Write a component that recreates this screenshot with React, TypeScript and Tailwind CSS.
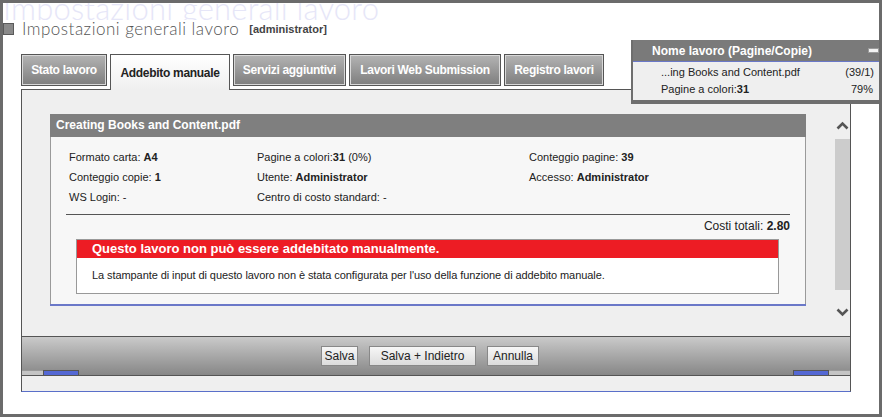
import React from 'react';

const tabs = [
  { label: 'Stato lavoro', w: 'w-[86px]' },
  { label: 'Addebito manuale', w: 'w-[120px]', active: true },
  { label: 'Servizi aggiuntivi', w: 'w-[113px]' },
  { label: 'Lavori Web Submission', w: 'w-[152px]' },
  { label: 'Registro lavori', w: 'w-[100px]' },
];

function Chevron({ up }: { up?: boolean }) {
  return (
    <svg width="13" height="9" viewBox="0 0 13 9" className="block">
      <path
        d={up ? 'M1.5 7.5 L6.5 2.5 L11.5 7.5' : 'M1.5 1.5 L6.5 6.5 L11.5 1.5'}
        fill="none"
        stroke="#555"
        strokeWidth="2.6"
      />
    </svg>
  );
}

function Field({ label, value }: { label: string; value?: string }) {
  return (
    <div className="h-[20px] leading-[20px] whitespace-nowrap">
      {label}
      {value && <span className="font-bold">{value}</span>}
    </div>
  );
}

export default function App() {
  return (
    <div className="relative w-[882px] h-[417px] bg-white border-[3px] border-[#6b6b6b] font-['Liberation_Sans',Arial,sans-serif] text-[#222] overflow-hidden">
      {/* Watermark title */}
      <div className="h-[17px] overflow-hidden">
        <div className="mt-[-3px] h-[17px] text-[31px] leading-[17px] text-[#e6e6f8] font-['Lato',sans-serif] font-light whitespace-nowrap tracking-[0.2px]">
          Impostazioni generali lavoro
        </div>
      </div>

      {/* Heading */}
      <div className="h-[17px] flex items-center">
        <div className="w-[11px] h-[12px] bg-[#8a8a8a] border border-[#5a5a5a]" />
        <span className="ml-[8px] text-[17px] leading-[17px] text-[#555] font-['Lato',sans-serif] font-light tracking-[0.5px]">
          Impostazioni generali lavoro
        </span>
        <span className="ml-[10px] mt-[2px] text-[11px] font-bold text-[#444]">[administrator]</span>
      </div>

      <div className="ml-[18px] w-[830px] mt-[17px]">
        {/* Tabs */}
        <div className="h-[35px] flex items-end gap-[3px] relative z-10">
          {tabs.map((t) =>
            t.active ? (
              <div
                key={t.label}
                className={`${t.w} h-[36px] -mb-px border border-b-0 border-[#555] bg-gradient-to-b from-white to-[#efefef] flex justify-center pt-[9px] text-[12px] font-bold text-[#222] tracking-[-0.3px]`}
              >
                {t.label}
              </div>
            ) : (
              <div
                key={t.label}
                className={`${t.w} h-[32px] mb-[3px] border border-[#555] shadow-[inset_0_0_0_1px_#d8d8d8] bg-gradient-to-b from-[#b4b4b4] to-[#7e7e7e] flex items-center justify-center text-[12px] font-bold text-white tracking-[-0.3px]`}
              >
                {t.label}
              </div>
            )
          )}
        </div>

        {/* Panel */}
        <div className="border-x border-t border-[#555] border-b border-b-[#5a6fc9]">
          {/* Scroll area */}
          <div className="h-[246px] bg-[#efefef] flex">
            <div className="flex-1 pl-[28px] pt-[24px]">
              <div className="w-[756px] border-b-2 border-[#6a78c8]">
                <div className="h-[23px] bg-[#7f7f7f] text-white font-bold text-[12px] leading-[23px] pl-[6px]">
                  Creating Books and Content.pdf
                </div>
                <div className="bg-[#f7f7f7] border-x border-[#9a9a9a] pt-[10px] pb-[10px] text-[11px]">
                  <div className="grid grid-cols-[188px_272px_1fr] pl-[18px]">
                    <div>
                      <Field label="Formato carta: " value="A4" />
                      <Field label="Conteggio copie: " value="1" />
                      <Field label="WS Login:  -" />
                    </div>
                    <div>
                      <div className="h-[20px] leading-[20px] whitespace-nowrap">
                        Pagine a colori:<span className="font-bold">31</span> (0%)
                      </div>
                      <Field label="Utente: " value="Administrator" />
                      <Field label="Centro di costo standard:  -" />
                    </div>
                    <div>
                      <Field label="Conteggio pagine: " value="39" />
                      <Field label="Accesso: " value="Administrator" />
                    </div>
                  </div>
                  <div className="mx-[15px] mt-[7px] border-t border-[#555]" />
                  <div className="mx-[15px] mt-[3px] h-[16px] leading-[16px] text-right text-[12px]">
                    Costi totali: <span className="font-bold">2.80</span>
                  </div>
                  <div className="ml-[25px] mr-[26px] mt-[5px] border border-[#999] bg-white">
                    <div className="h-[18px] bg-[#ed1c24] text-white font-bold text-[13px] leading-[18px] pl-[15px]">
                      Questo lavoro non può essere addebitato manualmente.
                    </div>
                    <div className="h-[35px] leading-[34px] pl-[15px] text-[11px] tracking-[-0.08px]">
                      La stampante di input di questo lavoro non è stata configurata per l'uso della funzione di addebito manuale.
                    </div>
                  </div>
                </div>
              </div>
            </div>
            {/* Scrollbar */}
            <div className="w-[15px] flex flex-col items-center pt-[31px]">
              <Chevron up />
              <div className="w-[15px] h-[151px] mt-[9px] bg-[#cccccc]" />
              <div className="mt-[18px]">
                <Chevron />
              </div>
            </div>
          </div>

          {/* Footer */}
          <div className="h-[39px] border-t border-[#555] bg-gradient-to-b from-[#cacaca] to-[#878787] flex flex-col">
            <div className="h-[20px] mt-[9px] flex justify-center gap-[11px] pr-[12px] text-[12px]">
              <button className="w-[37px] h-[20px] border border-[#888] bg-gradient-to-b from-[#f7f7f7] to-[#dcdcdc] text-[#222]">Salva</button>
              <button className="w-[107px] h-[20px] border border-[#888] bg-gradient-to-b from-[#f7f7f7] to-[#dcdcdc] text-[#222]">Salva + Indietro</button>
              <button className="w-[52px] h-[20px] border border-[#888] bg-gradient-to-b from-[#f7f7f7] to-[#dcdcdc] text-[#222]">Annulla</button>
            </div>
            <div className="mt-auto h-[5px] flex justify-between">
              <div className="flex">
                <div className="w-[21px] bg-[#c4c4c4] border-t border-[#999]" />
                <div className="w-[36px] bg-[#5468d4] border border-b-0 border-[#555]" />
              </div>
              <div className="flex">
                <div className="w-[36px] bg-[#5468d4] border border-b-0 border-[#555]" />
                <div className="w-[21px] bg-[#c4c4c4] border-t border-[#999]" />
              </div>
            </div>
          </div>

          {/* Bottom strip */}
          <div className="h-[16px] border-t border-[#555] bg-[#efefef]" />
        </div>
      </div>

      {/* Floating job panel */}
      <div className="absolute left-[628px] top-[37px] w-[251px] border-l-2 border-b-4 border-[#6e6e6e] bg-[#efefef] text-[11px] z-20">
        <div className="h-[22px] bg-[#7a7a7a] border-b border-[#6a78c8] flex items-center pl-[19px] pr-[3px]">
          <span className="flex-1 text-white font-bold text-[12px]">Nome lavoro (Pagine/Copie)</span>
          <div className="w-[11px] h-[5px] bg-[#f2f2f2] border border-[#9a9a9a]" />
        </div>
        <div className="pl-[28px] pr-[8px] pt-[2px] pb-[2px]">
          <div className="h-[17px] leading-[17px] flex justify-between">
            <span>...ing Books and Content.pdf</span>
            <span>(39/1)</span>
          </div>
          <div className="h-[17px] leading-[17px] flex justify-between pr-[1px]">
            <span>
              Pagine a colori:<span className="font-bold">31</span>
            </span>
            <span>79%</span>
          </div>
        </div>
      </div>
    </div>
  );
}
